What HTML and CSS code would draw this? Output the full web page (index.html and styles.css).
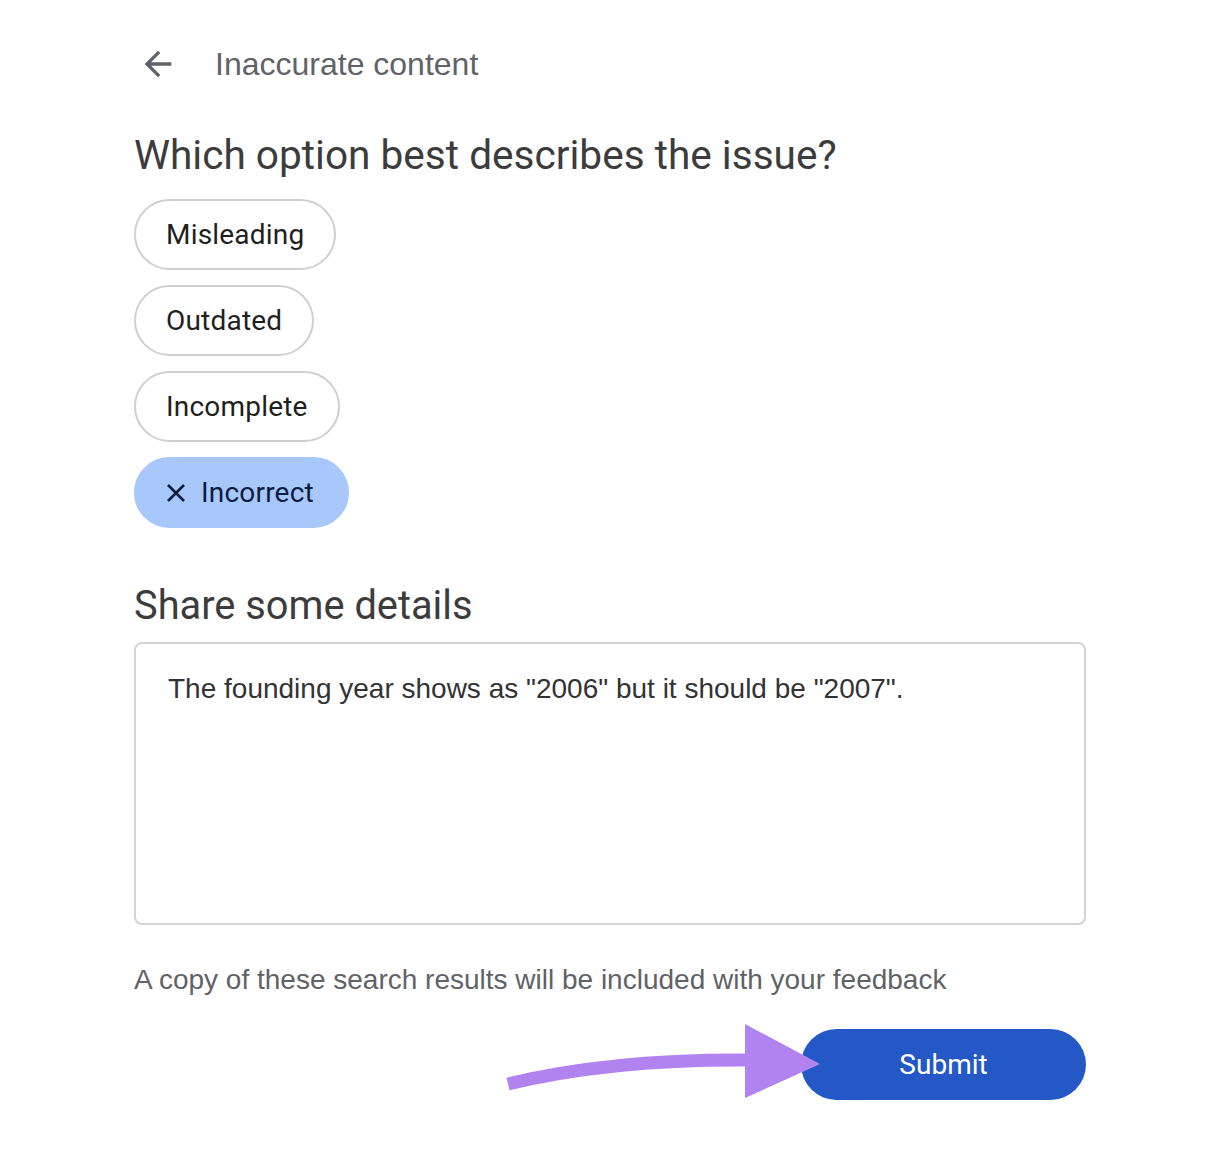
FILE: index.html
```html
<!DOCTYPE html>
<html>
<head>
<meta charset="utf-8">
<link rel="stylesheet" href="styles.css">
</head>
<body>
<main class="panel">
  <header class="topbar">
    <button class="back" aria-label="Back">
      <svg width="40" height="40" viewBox="0 0 24 24"><path d="M20 11H7.83l5.59-5.59L12 4l-8 8 8 8 1.41-1.41L7.83 13H20v-2z" fill="#5f6368"/></svg>
    </button>
    <span class="title">Inaccurate content</span>
  </header>

  <h2 class="question">Which option best describes the issue?</h2>
  <div class="chips">
    <button class="chip">Misleading</button>
    <button class="chip">Outdated</button>
    <button class="chip">Incomplete</button>
    <button class="chip selected">
      <svg class="x" width="22" height="22" viewBox="0 0 22 22"><path d="M3 3L19 19M19 3L3 19" stroke="#0b1d41" stroke-width="2.6" fill="none"/></svg>
      Incorrect
    </button>
  </div>

  <h2 class="details">Share some details</h2>
  <div class="box">The founding year shows as "2006" but it should be "2007".</div>

  <p class="note">A copy of these search results will be included with your feedback</p>

  <div class="actions">
    <button class="submit">Submit</button>
    <svg class="pointer" width="330" height="90" viewBox="0 0 330 90">
      <path d="M8 63 Q110 38 250 39" stroke="#b083f0" stroke-width="13" fill="none"/>
      <polygon points="245,3 245,77 320,43" fill="#b083f0"/>
    </svg>
  </div>
</main>
</body>
</html>
```

FILE: styles.css
```css
* { box-sizing: border-box; }
html, body { margin: 0; padding: 0; background: #fff; }
body { width: 1220px; height: 1160px; overflow: hidden; }

.panel {
  width: 1086px;
  padding: 0 0 0 134px;
  font-family: Roboto, "Noto Sans", sans-serif;
}

.topbar {
  display: flex;
  align-items: center;
  height: 64px;
  margin-top: 32px;
}

.back {
  border: 0;
  background: none;
  padding: 0;
  width: 48px;
  height: 48px;
  display: flex;
  align-items: center;
  justify-content: center;
}
.title {
  margin-left: 33px;
  font-family: "Liberation Sans", Arial, sans-serif;
  font-size: 32px;
  color: #5f6368;
}

.question, .details {
  font-weight: 400;
  font-size: 40.6px;
  color: #3c3c3c;
  margin: 0;
  line-height: 48px;
}
.question { margin-top: 35px; }

.chips {
  display: flex;
  flex-direction: column;
  align-items: flex-start;
  gap: 15px;
  margin-top: 20px;
}
.chip {
  height: 71px;
  border: 2px solid #cfcfcf;
  border-radius: 36px;
  background: #fff;
  padding: 0 30px;
  font-family: Roboto, "Noto Sans", sans-serif;
  font-size: 28px;
  letter-spacing: 0.2px;
  color: #1f1f1f;
  display: flex;
  align-items: center;
}
.chip.selected {
  background: #a8c7fa;
  border-color: #a8c7fa;
  color: #0b1d41;
  padding-left: 29px;
  padding-right: 33px;
  gap: 14px;
}

.details { margin-top: 54px; font-size: 39.8px; }

.box {
  margin-top: 12px;
  width: 952px;
  height: 283px;
  border: 2px solid #d3d3d3;
  border-radius: 8px;
  padding: 29px 32px;
  font-family: "Liberation Sans", Arial, sans-serif;
  font-size: 28px;
  line-height: 32px;
  color: #333;
}

.note {
  margin: 39px 0 0;
  font-family: "Liberation Sans", Arial, sans-serif;
  font-size: 28px;
  line-height: 32px;
  color: #5f6368;
}

.actions {
  position: relative;
  display: flex;
  justify-content: flex-end;
  width: 952px;
  margin-top: 33px;
}
.submit {
  width: 285px;
  height: 71px;
  border: 0;
  border-radius: 36px;
  background: #2458c6;
  color: #fff;
  font-family: Roboto, "Noto Sans", sans-serif;
  font-size: 28px;
}
.pointer {
  position: absolute;
  left: 366px;
  top: -8px;
}
```
